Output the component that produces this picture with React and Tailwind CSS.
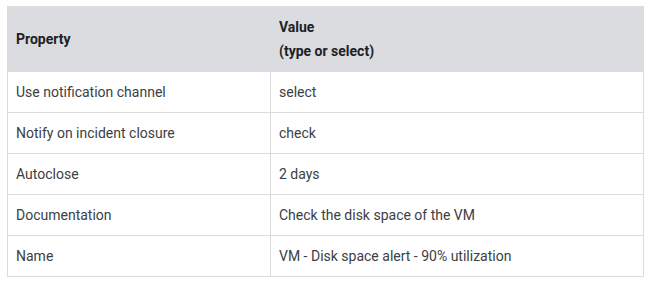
import React from "react";

const rows = [
  ["Use notification channel", "select"],
  ["Notify on incident closure", "check"],
  ["Autoclose", "2 days"],
  ["Documentation", "Check the disk space of the VM"],
  ["Name", "VM - Disk space alert - 90% utilization"],
];

export default function App() {
  return (
    <div
      className="w-[654px] h-[285px] bg-white pt-[6px] pl-[7px]"
      style={{ fontFamily: "Roboto, 'Liberation Sans', sans-serif" }}
    >
      <div className="w-[637px] border-x border-b border-[#dadce0] text-[14px] leading-[24px] text-[#3c4043]">
        <div className="flex h-[66px] bg-[#dadce0] font-bold text-[#202124]">
          <div className="w-[263px] flex items-center px-[8px]">Property</div>
          <div className="flex-1 flex flex-col justify-center px-[8px]">
            <span>Value</span>
            <span>(type or select)</span>
          </div>
        </div>
        {rows.map(([a, b], i) => (
          <div
            key={a}
            className={
              i < rows.length - 1
                ? "flex h-[41px] border-b border-[#dadce0]"
                : "flex h-[40px]"
            }
          >
            <div className="w-[263px] flex items-center px-[8px] border-r border-[#dadce0]">{a}</div>
            <div className="flex-1 flex items-center px-[8px]">{b}</div>
          </div>
        ))}
      </div>
    </div>
  );
}
